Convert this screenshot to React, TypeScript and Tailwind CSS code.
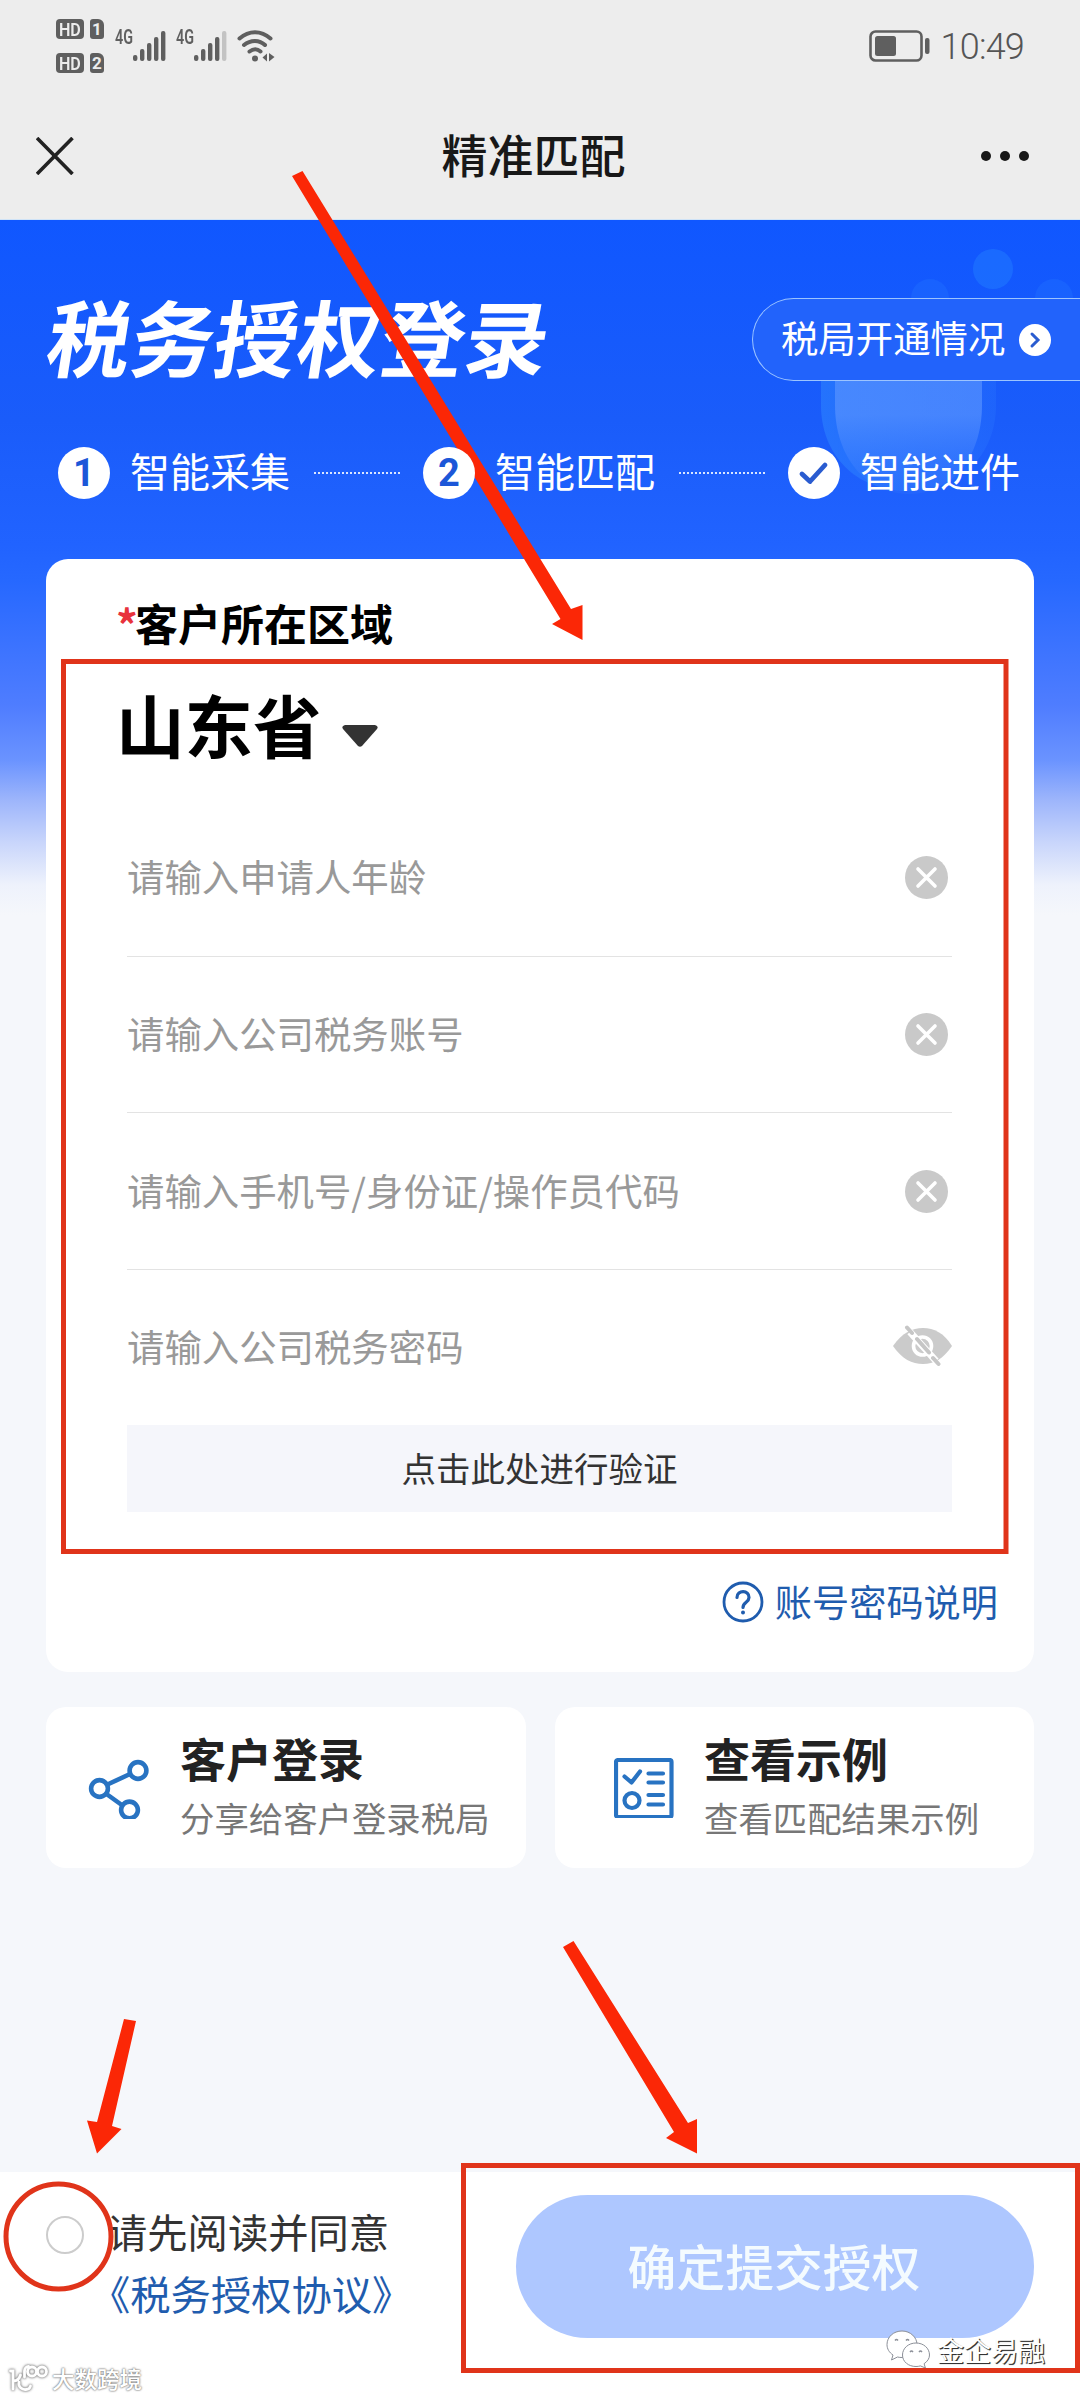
import { clsx } from "clsx";
import type { ReactNode } from "react";

const FIELDS = [
  { id: "age", placeholder: "请输入申请人年龄" },
  { id: "account", placeholder: "请输入公司税务账号" },
  { id: "operator", placeholder: "请输入手机号/身份证/操作员代码" },
];

const SIGNAL_BARS = [6, 12, 18, 24, 30];

function SimBadge({ slot }: { slot: number }) {
  return (
    <div className="flex h-5 gap-[6px] text-[#ededed]">
      <div className="flex w-7 items-center justify-center rounded-[4px] bg-[#5f5f5f]">
        <span className="scale-x-[0.85] font-[Roboto] text-[19px] leading-none font-semibold">HD</span>
      </div>
      <div className="flex w-[14px] items-center justify-center rounded-[3px] rounded-tr-[6px] bg-[#5f5f5f] font-[Roboto] text-[17px] leading-none font-bold">
        {slot}
      </div>
    </div>
  );
}

function Signal({ strength }: { strength: number }) {
  return (
    <div className="flex h-[31px] items-start">
      <span className="w-[18px] origin-left scale-x-[0.72] font-[Roboto] text-[20px] leading-[15px] font-semibold text-[#5f5f5f]">4G</span>
      <svg className="h-[31px] w-[34px]" viewBox="0 0 34 31">
        {SIGNAL_BARS.map((height, i) => (
          <rect key={height} x={i * 7} y={31 - height} width="4.4" height={height} rx="2" fill={i < strength ? "#5f5f5f" : "#c3c3c3"} />
        ))}
      </svg>
    </div>
  );
}

function WifiIcon() {
  return (
    <svg className="h-8 w-[38px]" viewBox="0 0 38 32" fill="none" stroke="#5f5f5f" strokeWidth="4" strokeLinecap="round">
      <path d="M2.500 8.500C12 0 24 0 33.500 8.500" />
      <path d="M7 15c6.500-5.500 15.500-5.500 21 0" />
      <path d="M12.500 21.500c4-3 7.500-3 11 0" />
      <circle cx="18" cy="28.500" r="3" fill="#5f5f5f" stroke="none" />
      <path d="M30 23.500v8l-4.500-4zM32 23l5.500 4-5.500 4.500z" fill="#5f5f5f" stroke="none" />
    </svg>
  );
}

function BatteryIcon() {
  return (
    <svg className="h-8 w-[62px]" viewBox="0 0 62 32">
      <rect x="1.500" y="1.500" width="51" height="29" rx="5" fill="none" stroke="#5f5f5f" strokeWidth="2.600" />
      <rect x="6" y="6" width="21" height="20" rx="2.500" fill="#5f5f5f" />
      <rect x="56" y="8" width="4.500" height="16" rx="2" fill="#5f5f5f" />
    </svg>
  );
}

function ClearIcon() {
  return (
    <svg className="mr-1 h-[43px] w-[43px]" viewBox="0 0 43 43">
      <circle cx="21.500" cy="21.500" r="21.500" fill="#c9c9c9" />
      <path d="M13 13l17 17M30 13L13 30" stroke="#fff" strokeWidth="3.600" strokeLinecap="round" />
    </svg>
  );
}

function EyeOffIcon() {
  return (
    <svg className="h-[42px] w-[59px] -translate-y-[2px]" viewBox="0 0 59 42">
      <path d="M0 21C9 8 19 3 30 3s21 5 29 18C50 34 41 39 30 39S9 34 0 21z" fill="#cbcbcb" />
      <circle cx="29.500" cy="21" r="9" fill="none" stroke="#fff" strokeWidth="3.600" />
      <path d="M17 7l26 29" stroke="#fff" strokeWidth="7" />
      <path d="M14 2.500l5 5.500M24 14l12 13.500M40 33l5.500 6" stroke="#c6c6c6" strokeWidth="4" strokeLinecap="round" />
    </svg>
  );
}

function ShareIcon() {
  return (
    <svg className="h-[62px] w-[62px]" viewBox="0 0 62 62" fill="none" stroke="#2873c2" strokeWidth="4.600">
      <circle cx="11.500" cy="31.500" r="8.400" />
      <circle cx="50" cy="13.500" r="8.400" />
      <circle cx="41.500" cy="53" r="8.400" />
      <path d="M19.500 27.500l22.500-10.500M18.500 37l16 11.500" />
    </svg>
  );
}

function ChecklistIcon() {
  return (
    <svg className="h-[60px] w-[60px]" viewBox="0 0 60 60" fill="none" stroke="#2873c2" strokeWidth="4.200" strokeLinecap="round" strokeLinejoin="round">
      <rect x="2" y="2" width="55.500" height="57" rx="2" />
      <path d="M10.500 18.500l7 6L26 13.500M34.500 15.500h14.500M34.500 24.500h14.500M34.500 37h14.500M34.500 46.500h14.500" />
      <circle cx="18" cy="42.500" r="7.500" />
    </svg>
  );
}

function Step({ badge, label }: { badge: ReactNode; label: string }) {
  return (
    <div className="flex items-center">
      <div className="flex h-[52px] w-[52px] items-center justify-center rounded-full bg-white font-[Roboto] text-[38px] leading-none font-bold text-[#1c57d8]">
        {badge}
      </div>
      <span className="ml-5 -translate-y-[3px] text-[40px] leading-none text-white">{label}</span>
    </div>
  );
}

function StepDots() {
  return <div className="mr-[22px] ml-6 h-[2px] w-[87px] bg-[repeating-linear-gradient(90deg,#d9e6ff_0_2px,transparent_2px_4px)]" />;
}

function LinkCard({ icon, title, subtitle, className }: { icon: ReactNode; title: string; subtitle: string; className: string }) {
  return (
    <div className={clsx("flex h-[161px] items-center rounded-[20px] bg-white", className)}>
      {icon}
      <div className="-mt-[5px] ml-[30px]">
        <div className="text-[46px] leading-[56px] font-bold text-[#222]">{title}</div>
        <div className="mt-2 text-[34.400px] leading-[48px] text-[#777]">{subtitle}</div>
      </div>
    </div>
  );
}

// Faint bubbles behind the hero banner
function HeroDecoration() {
  return (
    <svg className="pointer-events-none absolute top-[220px] right-0 h-[320px] w-[300px]" viewBox="780 220 300 320">
      <defs>
        <linearGradient id="bowl" x1="0" y1="0" x2="0" y2="1">
          <stop offset="0.3" stopColor="#5a94ff" stopOpacity="0.65" />
          <stop offset="1" stopColor="#3f80ff" stopOpacity="0.15" />
        </linearGradient>
        <linearGradient id="bowlRim" x1="0" y1="0" x2="1" y2="0">
          <stop offset="0" stopColor="#2e86ff" stopOpacity="0.55" />
          <stop offset="1" stopColor="#2e7cff" stopOpacity="0.25" />
        </linearGradient>
      </defs>
      <circle cx="993" cy="269" r="20" fill="#1e74ff" opacity="0.65" />
      <circle cx="930" cy="298" r="19" fill="#1e6cff" opacity="0.5" />
      <circle cx="1054" cy="298" r="19" fill="#1e6cff" opacity="0.5" />
      <path d="M821 381h175v24c0 50-36 86-88 86s-87-36-87-86z" fill="url(#bowlRim)" />
      <path d="M835 381h147v24c0 52-30 89-73 89s-74-37-74-89z" fill="url(#bowl)" />
    </svg>
  );
}

// Hand-placed guide marks pointing at the parts the user has to fill in
function GuideMarks() {
  return (
    <svg className="pointer-events-none absolute inset-0 h-[2400px] w-[1080px]" viewBox="0 0 1080 2400">
      <g fill="none" stroke="#e0341a">
        <rect x="63.500" y="661.500" width="942.500" height="890" strokeWidth="5" />
        <rect x="463.500" y="2165.500" width="614" height="205" strokeWidth="5" />
        <circle cx="58.500" cy="2236.500" r="52.500" strokeWidth="5" />
      </g>
      <g fill="#fb2706">
        <path d="M292 176l10.500-5L571 609l11.500-4v35L552 624l8.500-5z" />
        <path d="M124 2019l12 2-24 105 9.500 3L97 2153.500l-10-33 10 1.500z" />
        <path d="M563 1947l10.500-6L688 2123l9-4v34.500L666 2138l8-6z" />
      </g>
    </svg>
  );
}

function WechatMark() {
  return (
    <div className="absolute top-[2330px] left-[886px] flex items-center">
      <svg className="h-[38px] w-[45px]" viewBox="0 0 45 38" fill="#fff" stroke="#8b8f98" strokeWidth="1">
        <path d="M16 1C7.500 1 1 7 1 14.500c0 4.500 2.300 8 6 10.500l-1.500 5 6-3c1.500.4 3 .5 4.500.5 8.500 0 15-6 15-13S24.500 1 16 1z" />
        <path d="M30 13c-7.500 0-13.500 5.200-13.500 12S22.500 36.500 30 36.500c1.600 0 3-.2 4.400-.6l5 2.100-1.300-4.300c3.300-2.200 5.400-5.200 5.400-8.700C43.500 18.200 37.500 13 30 13z" />
        <path d="M9 10.500q1.500-2 3 0M20 10.500q1.500-2 3 0M24 22q1.500-2 3 0M33 22q1.500-2 3 0" fill="none" strokeWidth="1.400" />
      </svg>
      <span className="ml-[6px] text-[27px] leading-none text-white [text-shadow:1px_1px_0_#333,1px_1px_1px_#555]">金企易融</span>
    </div>
  );
}

function SiteMark() {
  return (
    <div className="absolute top-[2364px] left-[9px] flex items-center">
      <svg
        className="h-[28px] w-[40px] [filter:drop-shadow(0_0_1px_#888)_drop-shadow(0_0_1px_#aaa)]"
        viewBox="0 0 40 28"
        fill="none"
        stroke="#fff"
        strokeWidth="2.800"
        strokeLinecap="round"
      >
        <path d="M1.500 7H4v18M4.500 17c4 0 6-3 7-6M10 18c-1 5 3 8 7 7.500 2.500 0 4-1.500 4.500-3.500" />
        <path d="M15.500 13V7c0-3 2-4.500 4-4.500" />
        <circle cx="23" cy="7.500" r="4.500" />
        <circle cx="33" cy="7.500" r="4.500" />
      </svg>
      <span className="ml-[3px] text-[22.500px] leading-none font-medium text-white [text-shadow:0_0_2px_#777,0_0_2px_#777]">大数跨境</span>
    </div>
  );
}

export default function App() {
  return (
    <div className="relative flex h-[2400px] w-[1080px] flex-col overflow-hidden bg-[#f5f7fb] font-['Noto_Sans_CJK_SC',sans-serif]">
      <header className="h-[220px] border-b border-[#cfe3f7] bg-[#ededed]">
        <div className="flex h-[92px] items-center justify-between pr-[56px] pl-[56px]">
          <div className="flex items-center">
            <div className="flex flex-col gap-[14px]">
              <SimBadge slot={1} />
              <SimBadge slot={2} />
            </div>
            <div className="ml-[11px] flex gap-[9px]">
              <Signal strength={5} />
              <Signal strength={4} />
              <WifiIcon />
            </div>
          </div>
          <div className="flex items-center">
            <BatteryIcon />
            <span className="ml-[10px] translate-y-[1px] font-[Roboto] text-[36px] leading-none font-light tracking-[-0.800px] text-[#555]">10:49</span>
          </div>
        </div>
        <div className="grid h-[127px] grid-cols-[1fr_auto_1fr] items-center pr-[51px] pl-9">
          <svg className="h-[38px] w-[38px]" viewBox="0 0 38 38" stroke="#222" strokeWidth="3.600">
            <path d="M1 1l35.500 36M36.500 1L1 37" />
          </svg>
          <h1 className="translate-x-[1px] -translate-y-[3px] text-[46px] leading-none font-medium text-[#181818]">精准匹配</h1>
          <div className="flex justify-end gap-[9px]">
            <i className="h-[10px] w-[10px] rounded-full bg-[#181818]" />
            <i className="h-[10px] w-[10px] rounded-full bg-[#181818]" />
            <i className="h-[10px] w-[10px] rounded-full bg-[#181818]" />
          </div>
        </div>
      </header>

      <main className="relative flex-1 bg-[linear-gradient(180deg,#1057ff_0px,#1a5cfa_200px,#2163ff_325px,#2668ff_360px,#4f7dff_486px,#6a93ff_540px,#9db5fb_580px,#c8d5fb_622px,#eef2fc_665px,#f5f7fb_695px)] pt-[78px]">
        <div className="flex h-[83px] items-center justify-between pl-[49px]">
          <h2 className="-translate-y-[5px] -skew-x-[9deg] text-[83.500px] leading-none font-bold text-white">税务授权登录</h2>
          <button className="z-10 flex h-[83px] w-[328px] items-center rounded-l-full border border-r-0 border-[#9cc4ff] bg-[#2263fb] pl-[28px]">
            <span className="-translate-y-[2px] text-[37.400px] leading-none text-white">税局开通情况</span>
            <svg className="ml-[14px] h-8 w-8" viewBox="0 0 32 32">
              <circle cx="16" cy="16" r="16" fill="#fff" />
              <path d="M13 10l6 6-6 6" fill="none" stroke="#2a5cd0" strokeWidth="3" strokeLinecap="round" />
            </svg>
          </button>
        </div>

        <div className="relative z-10 mt-[66px] flex h-[52px] items-center pl-[58px]">
          <Step badge="1" label="智能采集" />
          <StepDots />
          <Step badge="2" label="智能匹配" />
          <StepDots />
          <Step
            badge={
              <svg className="h-8 w-8" viewBox="0 0 32 32">
                <path d="M4 17l8 7.500L27 8" fill="none" stroke="#2a5cd0" strokeWidth="4.800" strokeLinecap="round" strokeLinejoin="round" />
              </svg>
            }
            label="智能进件"
          />
        </div>

        <section className="mx-[46px] mt-[60px] h-[1113px] rounded-[22px] bg-white pt-10">
          <div className="flex h-[50px] items-center pl-[70px] text-[43px] leading-none font-bold text-black">
            <span className="w-[19px] -translate-y-[1px] text-[#e8323c]">*</span>
            <span className="-translate-y-[2px]">客户所在区域</span>
          </div>
          <div className="flex h-[151px] items-center pl-[70px]">
            <span className="text-[68.500px] leading-none font-bold text-black">山东省</span>
            <svg className="mt-[22px] ml-[20px] h-[22px] w-9" viewBox="0 0 36 22">
              <path d="M3 0h30q4 1 2 4L20 21q-2 1.500-4 0L1 4Q-1 1 3 0z" fill="#333" />
            </svg>
          </div>
          <div className="mr-[82px] ml-[81px]">
            {FIELDS.map((field) => (
              <div key={field.id} className="flex h-[156.700px] items-center justify-between border-b border-[#e3e3e3]">
                <span className="-translate-y-[1px] text-[37.400px] leading-none text-[#999]">{field.placeholder}</span>
                <ClearIcon />
              </div>
            ))}
            <div className="flex h-[155px] items-center justify-between">
              <span className="-translate-y-[1px] text-[37.400px] leading-none text-[#999]">请输入公司税务密码</span>
              <EyeOffIcon />
            </div>
            <button className="flex h-[87px] w-full items-center justify-center bg-[#f5f6fb] text-[34.500px] leading-none text-[#333]">
              <span className="-translate-y-[1px]">点击此处进行验证</span>
            </button>
          </div>
          <div className="flex h-[180px] items-center justify-end pr-[36px] text-[#1f5cae]">
            <svg className="h-[42px] w-[42px]" viewBox="0 0 42 42" fill="none" stroke="#1f5cae" strokeWidth="2.800">
              <circle cx="21" cy="21" r="19" />
              <path d="M15 16.500c0-8 12.500-7.500 12 0 0 5-6 4.500-6 10" strokeWidth="3.200" strokeLinecap="round" />
              <circle cx="21" cy="31.500" r="2" fill="#1f5cae" stroke="none" />
            </svg>
            <span className="ml-[11px] text-[37.200px] leading-none">账号密码说明</span>
          </div>
        </section>

        <div className="mx-[46px] mt-[35px] grid grid-cols-[480px_479px] gap-[29px]">
          <LinkCard className="pl-[42px]" icon={<ShareIcon />} title="客户登录" subtitle="分享给客户登录税局" />
          <LinkCard className="pl-[59px]" icon={<ChecklistIcon />} title="查看示例" subtitle="查看匹配结果示例" />
        </div>
      </main>

      <footer className="flex h-[228px] justify-between bg-white pr-[46px] pl-[46px]">
        <div className="flex pt-[28px]">
          <div className="mt-4 h-[38px] w-[38px] rounded-full border-2 border-[#ccc]" />
          <div className="ml-[6px] text-[40.300px] leading-[62px] whitespace-nowrap">
            <div className="pl-[17px] text-[#333]">请先阅读并同意</div>
            <div className="text-[#1f5cae]">《税务授权协议》</div>
          </div>
        </div>
        <button className="mt-[23px] flex h-[143px] w-[518px] items-center justify-center rounded-full bg-[#aec7ff] text-[48.800px] leading-none font-medium text-[#f4fbff]">
          <span className="-translate-x-[1px] -translate-y-px">确定提交授权</span>
        </button>
      </footer>

      <HeroDecoration />
      <GuideMarks />
      <WechatMark />
      <SiteMark />
    </div>
  );
}
